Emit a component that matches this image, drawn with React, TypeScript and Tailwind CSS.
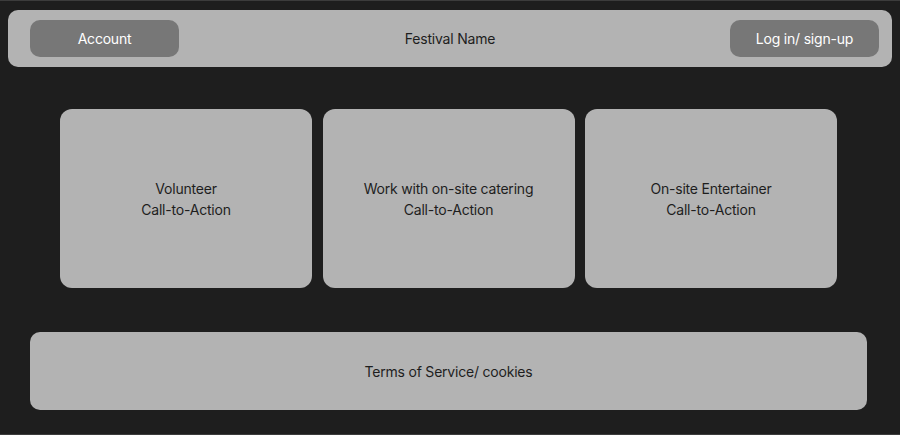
import React from 'react';

const cards = [
  { title: "Volunteer" },
  { title: "Work with on-site catering" },
  { title: "On-site Entertainer" },
];

const App: React.FC = () => {
  return (
    <div className="w-[900px] h-[435px] bg-[#1e1e1e] border-y border-[#3c3c3c] font-['Inter',sans-serif] text-[14px] tracking-[-0.015em] text-[#1e1e1e] flex flex-col">
      <header className="mt-[9px] mx-[8px] h-[57px] rounded-[10px] bg-[#b3b3b3] grid grid-cols-[1fr_auto_1fr] items-center px-[13px]">
        <button className="justify-self-start ml-[9px] w-[149px] h-[37px] rounded-[10px] bg-[#777777] text-white">Account</button>
        <span>Festival Name</span>
        <button className="justify-self-end w-[149px] h-[37px] rounded-[10px] bg-[#777777] text-white">Log in/ sign-up</button>
      </header>

      <div className="mt-[42px] ml-[60px] flex gap-[10.5px]">
        {cards.map((c, i) => (
          <div key={i} className="w-[252px] h-[179px] rounded-[12px] bg-[#b3b3b3] flex flex-col items-center justify-center leading-[21px] text-center">
            <span>{c.title}</span>
            <span>Call-to-Action</span>
          </div>
        ))}
      </div>

      <footer className="mt-[44px] ml-[30px] w-[837px] h-[78px] rounded-[10px] bg-[#b3b3b3] flex items-center justify-center">
        Terms of Service/ cookies
      </footer>
    </div>
  );
};

export default App;
